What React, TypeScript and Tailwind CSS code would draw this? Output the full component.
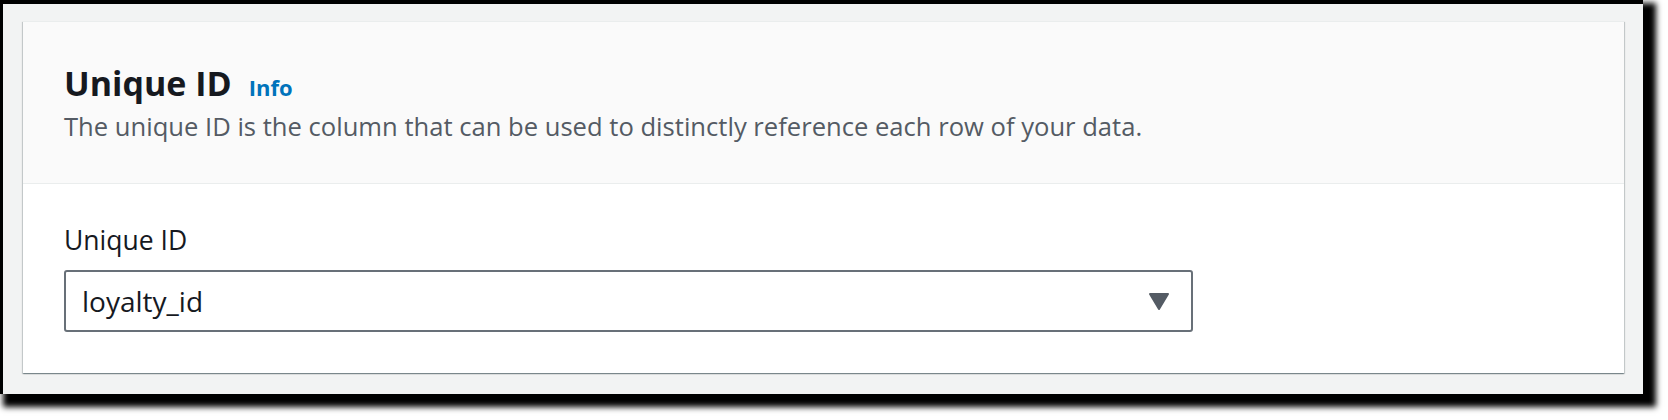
export default function App() {
  return (
    <div className="h-[420px] w-[1668px] bg-white" style={{ fontFamily: '"Open Sans", "Noto Sans", sans-serif' }}>
      {/* screenshot frame */}
      <div className="w-[1643px] border-t-4 border-l-[3px] border-black bg-[#f2f3f3] pl-5 pr-[19px] pt-[17px] pb-[21px] shadow-[8px_8px_6px_5px_rgba(0,0,0,1)]">
        <div className="border-t border-[#eaeded] bg-white shadow-[0_1px_1px_0_rgba(0,28,36,0.3),1px_1px_1px_0_rgba(0,28,36,0.15),-1px_1px_1px_0_rgba(0,28,36,0.15)]">
          <div className="border-b border-[#eaeded] bg-[#fafafa] px-[41px] pt-[41px] pb-[40px]">
            <div className="flex items-baseline gap-[17px]">
              <h2 className="text-[34px] leading-[40px] font-bold text-[#16191f]">Unique ID</h2>
              <a className="text-[22px] leading-[40px] font-bold text-[#0073bb]">Info</a>
            </div>
            <p className="mt-1 text-[25.6px] leading-[32px] text-[#545b64]">
              The unique ID is the column that can be used to distinctly reference each row of your data.
            </p>
          </div>

          <div className="px-[41px] pt-[40px] pb-[41px]">
            <label className="block text-[26.5px] leading-[32px] text-[#16191f]">Unique ID</label>
            <div className="mt-[14px] flex h-[62px] w-[1129px] items-center justify-between rounded-[3px] border-2 border-[#687078] bg-white pl-4 pr-[21px]">
              <span className="text-[28px] leading-[32px] text-[#16191f]">loyalty_id</span>
              <svg width="22" height="19" viewBox="0 0 22 19">
                <polygon points="2,2 20,2 11,17" fill="#545b64" stroke="#545b64" strokeWidth="2" strokeLinejoin="round" />
              </svg>
            </div>
          </div>
        </div>
      </div>
    </div>
  );
}
